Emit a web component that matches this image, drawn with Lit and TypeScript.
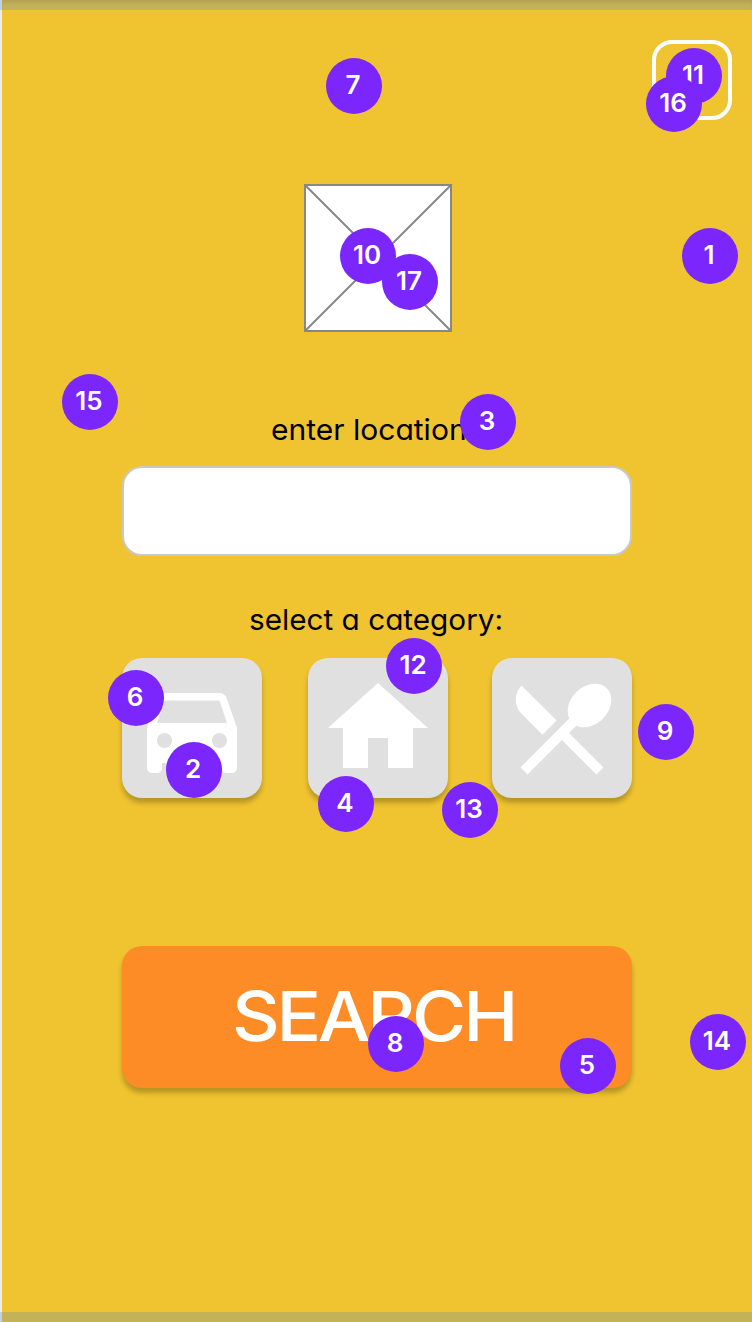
import { LitElement, html, css, svg } from "lit";
import { customElement } from "lit/decorators.js";

interface Pin {
  n: number;
  x: number;
  y: number;
}

const PINS: Pin[] = [
  { n: 1, x: 710, y: 256 },
  { n: 2, x: 194, y: 770 },
  { n: 3, x: 488, y: 422 },
  { n: 4, x: 346, y: 804 },
  { n: 5, x: 588, y: 1066 },
  { n: 6, x: 136, y: 698 },
  { n: 7, x: 354, y: 86 },
  { n: 8, x: 396, y: 1044 },
  { n: 9, x: 666, y: 732 },
  { n: 10, x: 368, y: 256 },
  { n: 11, x: 694, y: 76 },
  { n: 12, x: 414, y: 666 },
  { n: 13, x: 470, y: 810 },
  { n: 14, x: 718, y: 1042 },
  { n: 15, x: 90, y: 402 },
  { n: 16, x: 674, y: 104 },
  { n: 17, x: 410, y: 282 },
];

const CATEGORIES = [
  {
    name: "car",
    shape: svg`<path d="M18.92 6.01C18.72 5.42 18.16 5 17.5 5h-11c-.66 0-1.21.42-1.42 1.01L3 12v8c0 .55.45 1 1 1h1c.55 0 1-.45 1-1v-1h12v1c0 .55.45 1 1 1h1c.55 0 1-.45 1-1v-8l-2.08-5.99zM6.5 16c-.83 0-1.5-.67-1.5-1.5S5.67 13 6.5 13s1.5.67 1.5 1.5S7.33 16 6.5 16zm11 0c-.83 0-1.5-.67-1.5-1.5s.67-1.5 1.5-1.5 1.5.67 1.5 1.5-.67 1.5-1.5 1.5zM5 11l1.5-4.5h11L19 11H5z"/>`,
  },
  {
    name: "home",
    shape: svg`<path d="M10 20v-6h4v6h5v-8h3L12 3 2 12h3v8z"/>`,
  },
  {
    name: "dining",
    shape: svg`<path d="M8.1 13.34l2.83-2.83L3.91 3.5c-1.56 1.56-1.56 4.09 0 5.66l4.19 4.18zm6.78-1.81c1.53.71 3.68.21 5.27-1.38 1.91-1.91 2.28-4.65.81-6.12-1.46-1.46-4.2-1.1-6.12.81-1.59 1.59-2.09 3.74-1.38 5.27L3.7 19.87l1.41 1.41L12 14.41l6.88 6.88 1.41-1.41L13.41 13l1.47-1.47z"/>`,
  },
];

@customElement("app-root")
export class AppRoot extends LitElement {
  static styles = css`
    :host {
      display: block;
      font-family: Inter, "Liberation Sans", sans-serif;
    }
    * {
      box-sizing: border-box;
    }
    .screen {
      position: relative;
      height: 1322px;
      background: #f0c430;
      border-left: 2px solid #ebebeb;
      display: flex;
      flex-direction: column;
    }
    .band {
      position: absolute;
      left: -2px;
      right: 0;
      height: 10px;
      background: #c4b259;
      border-left: 2px solid #bdd0ea;
    }
    .top {
      top: 0;
      box-shadow: inset 0 4px 4px -2px rgba(0, 0, 0, 0.12);
    }
    .bottom {
      bottom: 0;
    }
    .header {
      display: flex;
      justify-content: flex-end;
      padding: 40px 20px 0 0;
    }
    .menu {
      width: 80px;
      height: 80px;
      border: 4px solid #fff;
      border-radius: 20px;
    }
    .logo {
      display: block;
      width: 148px;
      height: 148px;
      margin: 64px 0 0 302px;
    }
    .form {
      width: 510px;
      margin: 80px 0 0 120px;
      display: flex;
      flex-direction: column;
    }
    .label {
      height: 36px;
      line-height: 36px;
      font-size: 29px;
      font-weight: 400;
      color: #000;
      white-space: nowrap;
      font-feature-settings: "cv11";
    }
    .wide {
      display: inline-block;
      transform-origin: 0 50%;
      transform: scaleX(1.025);
    }
    .where {
      padding-left: 149px;
    }
    .where .wide {
      transform: scaleX(1.035);
    }
    .what {
      margin-top: 46px;
      padding-left: 127px;
    }
    .field {
      height: 90px;
      margin-top: 18px;
      background: #fff;
      border: 2px solid #c8c8c8;
      border-radius: 20px;
    }
    .tiles {
      margin-top: 20px;
      display: grid;
      grid-template-columns: 140px 140px 140px;
      column-gap: 46px;
    }
    .tile:last-child {
      margin-left: -2px;
      margin-right: 2px;
    }
    .tile {
      height: 140px;
      padding: 10px;
      border-radius: 20px;
      background: #e0e0e0;
      box-shadow: 0 5px 5px rgba(0, 0, 0, 0.24);
    }
    .tile svg {
      display: block;
      width: 120px;
      height: 120px;
      fill: #fff;
    }
    .search {
      height: 142px;
      margin-top: 148px;
      padding-left: 110px;
      border-radius: 20px;
      background: #fd8c26;
      box-shadow: 0 5px 5px rgba(0, 0, 0, 0.24);
      color: #fff;
      font-size: 69px;
      font-weight: 500;
      line-height: 141px;
      letter-spacing: -3px;
    }
    .search .wide {
      transform: scaleX(1.073);
    }
    .pin {
      position: absolute;
      width: 56px;
      height: 56px;
      margin: -28px 0 0 -30px;
      border-radius: 50%;
      background: #7a26fc;
      color: #fff;
      font-size: 26px;
      font-weight: 600;
      line-height: 54px;
      text-align: center;
      text-indent: -2px;
    }
  `;

  render() {
    return html`
      <div class="screen">
        <div class="header"><div class="menu"></div></div>
        <svg class="logo" viewBox="0 0 148 148">
          <rect x="1" y="1" width="146" height="146" fill="#fff" />
          <path
            d="M1 1H147V147H1ZM1 1L147 147M147 1L1 147"
            fill="none"
            stroke="#878787"
            stroke-width="2"
          />
        </svg>
        <div class="form">
          <div class="label where"><span class="wide">enter location:</span></div>
          <div class="field"></div>
          <div class="label what"><span class="wide">select a category:</span></div>
          <div class="tiles">
            ${CATEGORIES.map(
              (c) => html`<div class="tile">
                <svg viewBox="0 0 24 24" aria-label=${c.name}>${c.shape}</svg>
              </div>`
            )}
          </div>
          <div class="search"><span class="wide">SEARCH</span></div>
        </div>
        <div class="band top"></div>
        <div class="band bottom"></div>
        ${PINS.map(
          (p) => html`<div class="pin" style="left:${p.x}px;top:${p.y}px">${p.n}</div>`
        )}
      </div>
    `;
  }
}
